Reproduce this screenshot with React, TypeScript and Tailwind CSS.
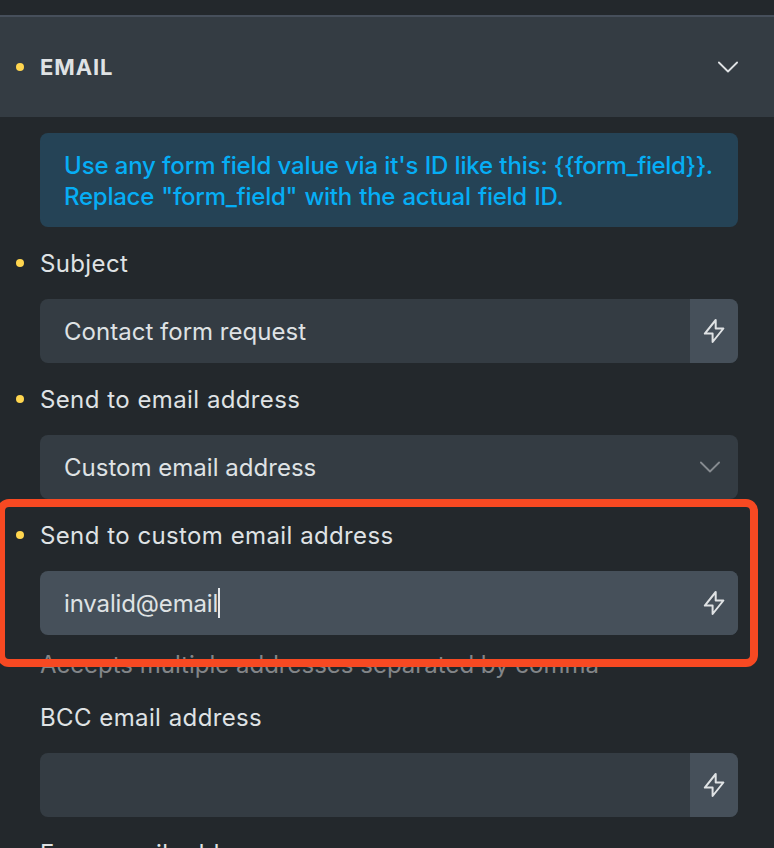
import type { ReactNode } from 'react';

const BoltIcon = () => (
  <svg width="24" height="26" viewBox="0 0 24 26" fill="none" stroke="currentColor" strokeWidth="2" strokeLinejoin="round">
    <path d="M13.7 2 L2.8 15.6 H10.6 V24 L21.4 10.5 H13.7 Z" />
  </svg>
);

const ChevronIcon = () => (
  <svg width="22" height="12" viewBox="0 0 22 12" fill="none" stroke="currentColor" strokeWidth="1.8" strokeLinecap="round" strokeLinejoin="round">
    <path d="M1.9 1.5 L11 10.5 L20.1 1.5" />
  </svg>
);

const Dot = () => <span className="block size-2 shrink-0 rounded-full bg-[#ffd64f]" />;

interface FieldProps {
  label: string;
  changed?: boolean;
  description?: string;
  children?: ReactNode;
}

const Field = ({ label, changed, description, children }: FieldProps) => (
  <div>
    <div className="flex h-[72px] items-center pl-4">
      <div className="w-6">{changed && <Dot />}</div>
      <span className="pt-0.5 tracking-[0.36px] [word-spacing:0.4px]">{label}</span>
    </div>
    <div className="ml-10 mr-9">{children}</div>
    {description && (
      <p className="ml-10 h-[46px] pt-[15px] leading-[30px] tracking-[0px] text-[#828588]">{description}</p>
    )}
  </div>
);

interface TextInputProps {
  value?: string;
  focused?: boolean;
}

const TextInput = ({ value, focused }: TextInputProps) => (
  <div className={`flex h-16 overflow-hidden rounded-lg ${focused ? 'bg-[#46505a]' : 'bg-[#343c43]'}`}>
    <div className="flex flex-1 items-center pl-6">
      <span className={focused ? 'pt-0.5 tracking-[-0.15px]' : 'pt-0.5 tracking-[0.02px]'}>{value}</span>
      {focused && <span className="h-[30px] w-0.5 bg-[#e8eaec]" />}
    </div>
    <div className="flex w-12 items-center justify-center bg-[#46505a]">
      <BoltIcon />
    </div>
  </div>
);

const App = () => {
  return (
    <div className="relative h-[848px] w-[774px] overflow-hidden bg-[#23282c] pt-[15px] font-['Inter',sans-serif] text-2xl leading-[30px] text-[#dfe2e4]">
      <div className="flex h-[102px] items-center border-t-2 border-[#464f5b] bg-[#343c43] pl-4 pr-[35px]">
        <div className="w-6">
          <Dot />
        </div>
        <h2 className="flex-1 text-[22px] font-bold tracking-[0.9px]">EMAIL</h2>
        <ChevronIcon />
      </div>

      <div className="ml-10 mr-9 mt-4 rounded-lg bg-[#254356] px-6 pb-[15px] pt-[17px] font-medium leading-[31px] text-[#06aef5]">
        <p className="whitespace-nowrap tracking-[-0.13px]">
          Use any form field value via it's ID like this: <span className="tracking-[-0.4px]">{'{{form_field}}.'}</span>
        </p>
        <p className="whitespace-nowrap tracking-[-0.25px] [word-spacing:1.1px]">
          Replace "form_field" with the actual field ID.
        </p>
      </div>

      <Field label="Subject" changed>
        <TextInput value="Contact form request" />
      </Field>

      <Field label="Send to email address" changed>
        <div className="flex h-16 items-center justify-between rounded-lg bg-[#343c43] pl-6 pr-[17px]">
          <span className="pt-0.5 tracking-[0.02px]">Custom email address</span>
          <span className="text-[#868b90]">
            <ChevronIcon />
          </span>
        </div>
      </Field>

      <Field label="Send to custom email address" changed description="Accepts multiple addresses separated by comma">
        <TextInput value="invalid@email" focused />
      </Field>

      <Field label="BCC email address">
        <TextInput />
      </Field>

      <Field label="From email address" />

      {/* highlight around the custom address field */}
      <div className="absolute -left-[3px] top-[499px] h-[168px] w-[761px] rounded-xl border-8 border-[#f74922]" />
    </div>
  );
};

export default App;
